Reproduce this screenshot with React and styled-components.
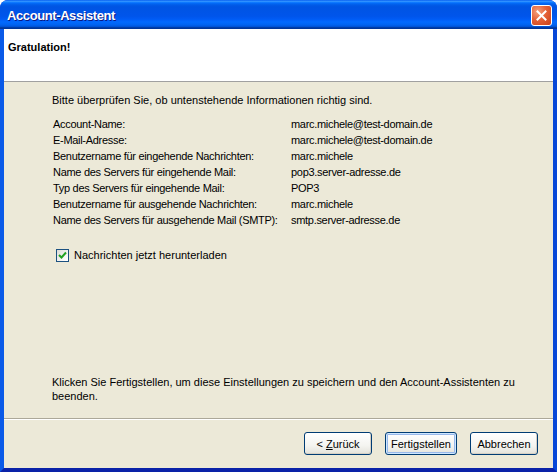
import React from "react";
import styled, { createGlobalStyle } from "styled-components";

const GlobalStyle = createGlobalStyle`
    html, body {
        margin: 0;
        padding: 0;
        background: #ffffff;
    }
    body {
        font-family: "Liberation Sans", Arial, sans-serif;
        font-size: 11px;
        color: #000000;
    }
`;

const Window = styled.div`
    width: 557px;
    height: 472px;
    display: flex;
    flex-direction: column;
    border-radius: 8px 8px 0 0;
    overflow: hidden;
    background: #0831d9;
`;

const TitleBar = styled.div`
    height: 29px;
    flex-shrink: 0;
    display: flex;
    align-items: center;
    justify-content: space-between;
    padding: 0 5px 0 7px;
    box-sizing: border-box;
    background: linear-gradient(
        to bottom,
        #0058ee 0%,
        #3593ff 4%,
        #288eff 6%,
        #127dff 8%,
        #036ffc 10%,
        #0262ee 14%,
        #0057e5 20%,
        #0054e3 24%,
        #0055eb 56%,
        #005bf5 66%,
        #026afe 76%,
        #0062ef 86%,
        #0052d6 92%,
        #0040ab 94%,
        #003092 100%
    );
`;

const Title = styled.span`
    font-family: "Liberation Sans", Arial, sans-serif;
    font-weight: bold;
    font-size: 13px;
    color: #ffffff;
    text-shadow: 1px 1px 0 #0a1883;
    letter-spacing: -0.4px;
    margin-top: 1px;
`;

const CloseButton = styled.div`
    width: 21px;
    height: 21px;
    box-sizing: border-box;
    border: 1px solid #ffffff;
    border-radius: 3px;
    background: radial-gradient(
        circle at 30% 30%,
        #f5a27f 0%,
        #e56238 45%,
        #c8401a 100%
    );
    display: flex;
    align-items: center;
    justify-content: center;
    margin-top: 1px;
`;

const Frame = styled.div`
    flex: 1;
    display: flex;
    flex-direction: column;
    border-left: 4px solid #0a5ae8;
    border-right: 4px solid #0647d8;
    border-bottom: 4px solid #0a22a8;
    background: #ece9d8;
`;

const Header = styled.div`
    height: 53px;
    flex-shrink: 0;
    background: #ffffff;
    border-bottom: 1px solid #a0a0a0;
    box-sizing: border-box;
    padding: 11px 4px 0;
    line-height: 14px;
    font-weight: bold;
`;

const Content = styled.div`
    flex: 1;
    display: flex;
    flex-direction: column;
    padding: 11px 0 15px 48px;
    border-bottom: 1px solid #aca899;
    box-shadow: 0 1px 0 #ffffff;
`;

const Text = styled.div`
    line-height: 14px;
`;

const InfoTable = styled.div`
    display: grid;
    grid-template-columns: 238px auto;
    margin: 9px 0 0 1px;
    line-height: 16px;
    letter-spacing: -0.3px;
`;

const CheckRow = styled.label`
    display: flex;
    align-items: center;
    gap: 5px;
    margin: 19px 0 0 4px;
    height: 16px;
`;

const CheckBox = styled.span`
    width: 13px;
    height: 13px;
    box-sizing: border-box;
    border: 1px solid #1c5180;
    background: linear-gradient(135deg, #dcdcd7 0%, #ffffff 90%);
    display: flex;
    align-items: center;
    justify-content: center;
`;

const Spacer = styled.div`
    flex: 1;
`;

const Footer = styled.div`
    height: 49px;
    flex-shrink: 0;
    display: flex;
    justify-content: flex-end;
    align-items: flex-start;
    gap: 13px;
    padding: 13px 15px 0 0;
    box-sizing: border-box;
`;

const Button = styled.button`
    font-family: "Liberation Sans", Arial, sans-serif;
    font-size: 11px;
    color: #000000;
    width: ${(p) => p.$width || 68}px;
    height: 23px;
    padding: 0;
    border: 1px solid #003c74;
    border-radius: 3px;
    background: linear-gradient(to bottom, #ffffff 0%, #f4f4f0 60%, #e3e2da 100%);
    box-shadow: ${(p) =>
        p.$default
            ? "inset 0 0 0 1px #cee7ff, inset 0 0 0 2px #98b8ea"
            : "inset -1px -1px 0 #d6d0c5"};
`;

const Underline = styled.span`
    text-decoration: underline;
`;

const rows = [
    ["Account-Name:", "marc.michele@test-domain.de"],
    ["E-Mail-Adresse:", "marc.michele@test-domain.de"],
    ["Benutzername für eingehende Nachrichten:", "marc.michele"],
    ["Name des Servers für eingehende Mail:", "pop3.server-adresse.de"],
    ["Typ des Servers für eingehende Mail:", "POP3"],
    ["Benutzername für ausgehende Nachrichten:", "marc.michele"],
    ["Name des Servers für ausgehende Mail (SMTP):", "smtp.server-adresse.de"]
];

export default function App() {
    return (
        <>
            <GlobalStyle />
            <Window>
                <TitleBar>
                    <Title>Account-Assistent</Title>
                    <CloseButton>
                        <svg width="11" height="11" viewBox="0 0 11 11">
                            <path
                                d="M1.5 1.5 L9.5 9.5 M9.5 1.5 L1.5 9.5"
                                stroke="#ffffff"
                                strokeWidth="2"
                                strokeLinecap="square"
                            />
                        </svg>
                    </CloseButton>
                </TitleBar>
                <Frame>
                    <Header>Gratulation!</Header>
                    <Content>
                        <Text>
                            Bitte überprüfen Sie, ob untenstehende Informationen
                            richtig sind.
                        </Text>
                        <InfoTable>
                            {rows.map(([label, value]) => (
                                <React.Fragment key={label}>
                                    <span>{label}</span>
                                    <span>{value}</span>
                                </React.Fragment>
                            ))}
                        </InfoTable>
                        <CheckRow>
                            <CheckBox>
                                <svg width="9" height="9" viewBox="0 0 9 9">
                                    <path
                                        d="M1 4 L3.5 6.5 L8 1.5"
                                        stroke="#21a121"
                                        strokeWidth="2"
                                        fill="none"
                                    />
                                </svg>
                            </CheckBox>
                            Nachrichten jetzt herunterladen
                        </CheckRow>
                        <Spacer />
                        <Text>
                            Klicken Sie Fertigstellen, um diese Einstellungen zu
                            speichern und den Account-Assistenten zu
                            <br />
                            beenden.
                        </Text>
                    </Content>
                    <Footer>
                        <Button>
                            &lt; <Underline>Z</Underline>urück
                        </Button>
                        <Button $default $width={72}>
                            Fertigstellen
                        </Button>
                        <Button>Abbrechen</Button>
                    </Footer>
                </Frame>
            </Window>
        </>
    );
}
